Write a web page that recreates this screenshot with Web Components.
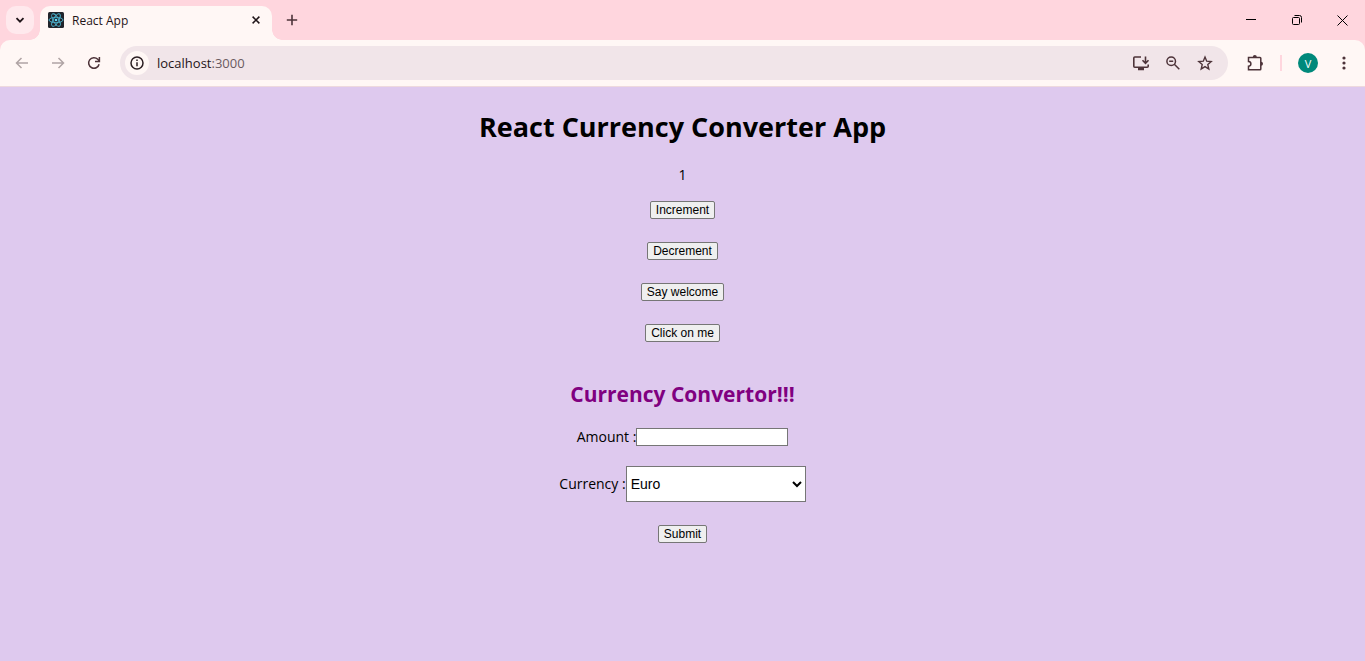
<!DOCTYPE html>
<html lang="en">
<head>
<meta charset="utf-8">
<title>React App</title>
<style>
html,body{height:100%}
body{margin:0;font-family:"Open Sans","Noto Sans",sans-serif;background:#dec9ee}
</style>
</head>
<body>
<browser-window>
  <tab-strip slot="tabs"><browser-tab>React App</browser-tab></tab-strip>
  <address-toolbar slot="toolbar" host="localhost" port=":3000"></address-toolbar>
  <converter-app></converter-app>
</browser-window>
<script>
const define = (name, html, setup) => customElements.define(name, class extends HTMLElement {
  connectedCallback() {
    if (this.shadowRoot) return;
    const t = document.createElement('template');
    t.innerHTML = html;
    this.attachShadow({mode: 'open'}).append(t.content.cloneNode(true));
    if (setup) setup(this, this.shadowRoot);
  }
});

define('browser-window', `<style>
:host{display:flex;flex-direction:column;min-height:100%;background:#ffd6de}
main{flex:1;background:#dec9ee}
</style><slot name="tabs"></slot><slot name="toolbar"></slot><main><slot></slot></main>`);

define('icon-button', `<style>
:host{display:block;flex:none}
button{display:grid;place-items:center;width:var(--w,28px);height:var(--h,28px);padding:0;border:0;border-radius:var(--r,14px);background:var(--bg,transparent);color:inherit;font:inherit}
</style><button type="button"><slot></slot></button>`, (el, root) => {
  root.querySelector('button').setAttribute('aria-label', el.getAttribute('label'));
});

define('tab-strip', `<style>
:host{display:flex;height:40px;box-sizing:border-box;padding-left:6px;color:#1f1418}
svg{display:block}
.search{--bg:#ffe9ed;--r:10px;margin:6px 6px 0 0}
.add{margin:6px 0 0 6px;color:#4d3339}
.controls{display:flex;margin-left:auto;--w:46px;--h:40px;--r:0;color:#000}
</style>
<icon-button class="search" label="Search tabs"><svg width="10" height="8" viewBox="0 0 10 8" fill="none" stroke="currentColor" stroke-width="1.8"><path d="M1.5 2.200l3.500 3.500 3.500-3.500"/></svg></icon-button>
<slot></slot>
<icon-button class="add" label="New tab"><svg width="12" height="12" viewBox="0 0 12 12" stroke="currentColor" stroke-width="1.6"><path d="M6 .8v10.4M.8 6h10.4"/></svg></icon-button>
<div class="controls">
<icon-button label="Minimize"><svg width="12" height="10" viewBox="-2 0 12 10"><path d="M0 4h10v1H0z"/></svg></icon-button>
<icon-button label="Restore"><svg width="12" height="10" viewBox="-2 0 12 10" fill="none" stroke="currentColor"><rect x=".5" y="2.5" width="7" height="7" rx="1"/><path d="M2.5.5H7.500A2 2 0 0 1 9.500 2.500V7.500"/></svg></icon-button>
<icon-button label="Close window"><svg width="12" height="11" viewBox="-1 0 12 11" stroke="currentColor"><path d="M.5.5l10 10M10.500.5l-10 10"/></svg></icon-button>
</div>`);

define('browser-tab', `<style>
:host{display:flex;position:relative;align-items:center;width:232px;height:34px;margin-top:6px;box-sizing:border-box;padding:0 2px 6px 8px;border-radius:10px 10px 0 0;background:#fff7f5;font-size:12px;color:#1f1418}
:host::before,:host::after{content:"";position:absolute;bottom:0;width:10px;height:10px}
:host::before{right:100%;background:radial-gradient(circle at 0 0,transparent 9.5px,#fff7f5 10px)}
:host::after{left:100%;background:radial-gradient(circle at 100% 0,transparent 9.5px,#fff7f5 10px)}
span{flex:1;margin-left:8px}
svg{display:block}
</style>
<svg width="16" height="16" viewBox="0 0 16 16"><rect width="16" height="16" rx="1.500" fill="#20232a"/><g fill="none" stroke="#4cb4d0" stroke-width=".9"><ellipse cx="8" cy="8" rx="7" ry="2.700"/><ellipse cx="8" cy="8" rx="7" ry="2.700" transform="rotate(60 8 8)"/><ellipse cx="8" cy="8" rx="7" ry="2.700" transform="rotate(120 8 8)"/></g><circle cx="8" cy="8" r="1.300" fill="#61dafb"/></svg>
<span><slot></slot></span>
<icon-button label="Close tab"><svg width="8" height="8" viewBox="0 0 8 8" stroke="currentColor" stroke-width="1.500"><path d="M.6.6l6.800 6.800M7.400.6L.6 7.400"/></svg></icon-button>`);

define('address-toolbar', `<style>
:host{display:flex;align-items:center;height:47px;box-sizing:border-box;padding:0 7px 0 8px;background:#fff7f5;border-bottom:1px solid #eed9de;border-radius:10px 10px 0 0;color:#4d3339}
svg{display:block}
icon-button{margin-right:8px}
.off{color:#b0a4a5}
.bar{display:flex;flex:1;align-items:center;height:34px;box-sizing:border-box;margin:0 13px 0 4px;padding:0 5px;border-radius:17px;background:#f1e5e9}
.bar icon-button{margin-right:4px}
.bar .info{--w:24px;--h:24px;--bg:#fff7f5;margin-right:8px;color:#2b1e22}
.url{flex:1;font-size:13px;line-height:20px;color:#1f1418;outline:0}
.port{color:#6a5a5f}
.sep{width:2px;height:16px;margin:0 12px 0 3px;background:#ffd6de}
.avatar{--w:20px;--h:20px;--bg:#00897b;margin:0 12px 0 4px;color:#fff;font-size:11px}
.menu{margin:0}
</style>
<icon-button class="off" label="Back"><svg width="14" height="12" viewBox="0 0 14 12" fill="none" stroke="currentColor" stroke-width="1.500"><path d="M13 6H1.500M6.500 1l-5 5 5 5"/></svg></icon-button>
<icon-button class="off" label="Forward"><svg width="14" height="12" viewBox="0 0 14 12" fill="none" stroke="currentColor" stroke-width="1.500"><path d="M1 6h11.500M7.500 1l5 5-5 5"/></svg></icon-button>
<icon-button label="Reload"><svg width="14" height="14" viewBox="0 0 14 14" fill="none" stroke="currentColor" stroke-width="1.500"><path d="M12.100 8.200A5.300 5.300 0 1 1 10.800 3.300L12.300 5"/><path d="M12.400 1v4.400H8"/></svg></icon-button>
<div class="bar">
<icon-button class="info" label="View site information"><svg width="14" height="14" viewBox="0 0 14 14" fill="none" stroke="currentColor" stroke-width="1.500"><circle cx="7" cy="7" r="6"/><path d="M7 6.200v4M7 3.600v1.500"/></svg></icon-button>
<div class="url" role="textbox" aria-label="Address" tabindex="0"><span class="host"></span><span class="port"></span></div>
<icon-button label="Install app"><svg width="18" height="16" viewBox="0 0 18 16" fill="none" stroke="currentColor" stroke-width="1.600"><path d="M9 2H2.800Q1.800 2 1.800 3v8.200q0 1 1 1h12.400q1 0 1-1V9.500"/><path d="M6 14h6" stroke-width="2.500"/><path d="M13.500 1.500v6.500M10.500 5.300l3 3 3-3"/></svg></icon-button>
<icon-button label="Zoom"><svg width="14" height="14" viewBox="0 0 14 14" fill="none" stroke="currentColor" stroke-width="1.500"><circle cx="5.200" cy="5.200" r="4.300"/><path d="M8.300 8.300l5 5M3.200 5.200h4"/></svg></icon-button>
<icon-button label="Bookmark this tab"><svg width="16" height="16" viewBox="0 0 16 16" fill="none" stroke="currentColor" stroke-width="1.400"><path d="M8 2l1.700 4.200 4.500.4-3.400 3 1 4.400L8 11.600 4.200 14l1-4.400-3.400-3 4.500-.4z"/></svg></icon-button>
</div>
<icon-button label="Extensions"><svg width="18" height="18" viewBox="0 0 18 18" fill="none" stroke="currentColor" stroke-width="1.500"><path d="M2.500 3.500H14q.8 0 .8.800V15q0 .8-.8.800H2.500V12.200a2.400 2.400 0 0 0 0-4.800z"/><path d="M6.800 3a2 2 0 0 1 4 0zM15 7.700a2 2 0 0 1 0 4z" fill="currentColor" stroke="none"/></svg></icon-button>
<div class="sep"></div>
<icon-button class="avatar" label="Profile">V</icon-button>
<icon-button class="menu" label="Menu"><svg width="4" height="16" viewBox="0 0 4 16" fill="currentColor"><circle cx="2" cy="3" r="1.600"/><circle cx="2" cy="8" r="1.600"/><circle cx="2" cy="13" r="1.600"/></svg></icon-button>`, (el, root) => {
  root.querySelector('.host').textContent = el.getAttribute('host');
  root.querySelector('.port').textContent = el.getAttribute('port');
});

define('action-button', `<style>
:host{display:block}
button{display:block;height:18px;box-sizing:border-box;padding:0 5px;border:1px solid #767676;border-radius:2px;background:#efefef;color:#000;font:12px/16px "Liberation Sans",Arial,sans-serif}
</style><button type="button"><slot></slot></button>`);

define('counter-panel', `<style>
:host{display:flex;flex-direction:column;align-items:center;gap:23px}
output{margin-bottom:-6px}
</style><output>1</output>
<action-button id="inc">Increment</action-button>
<action-button id="dec">Decrement</action-button>
<action-button>Say welcome</action-button>
<action-button>Click on me</action-button>`, (el, root) => {
  const out = root.querySelector('output');
  const step = n => () => { out.textContent = Number(out.textContent) + n; };
  root.getElementById('inc').addEventListener('click', step(1));
  root.getElementById('dec').addEventListener('click', step(-1));
});

define('currency-form', `<style>
:host{display:block}
form{display:flex;flex-direction:column;align-items:center}
h2{margin:0 0 19px;font-size:21px;font-weight:700;line-height:30px;color:purple}
.row{display:flex;align-items:center}
.row+.row{margin:20px 0 23px}
input{width:152px;height:18px;box-sizing:border-box;padding:0 2px;border:1px solid #767676;background:#fff}
select{width:180px;height:36px;box-sizing:border-box;padding:0;border:1px solid #767676;border-radius:0;background:#fff;color:#000;font:14px "Liberation Sans",Arial,sans-serif}
</style><form>
<h2>Currency Convertor!!!</h2>
<div class="row"><label for="amount">Amount :</label><input id="amount" type="text"></div>
<div class="row"><label for="currency">Currency :</label><select id="currency"><option>Euro</option><option>Dollar</option><option>Pound</option></select></div>
<action-button>Submit</action-button>
</form>`);

define('converter-app', `<style>
:host{display:flex;flex-direction:column;align-items:center;padding-top:20px;font-size:14px;line-height:18px;color:#000}
h1{margin:0 0 19px;font-size:27px;font-weight:700;line-height:40px}
currency-form{margin-top:37px}
</style><h1>React Currency Converter App</h1>
<counter-panel></counter-panel>
<currency-form></currency-form>`);
</script>
</body>
</html>
